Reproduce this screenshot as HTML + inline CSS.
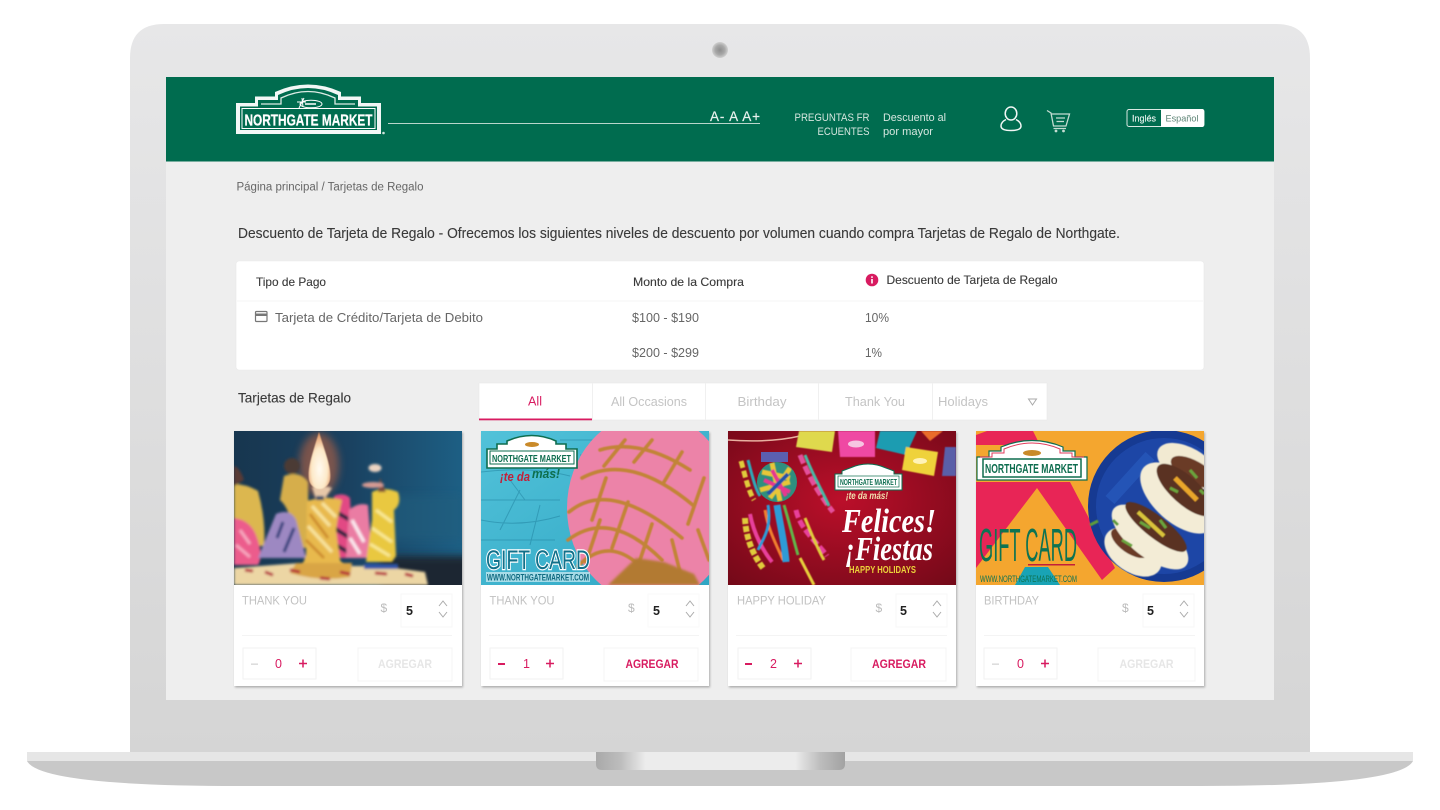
<!DOCTYPE html>
<html lang="es"><head><meta charset="utf-8"><title>Northgate Market</title>
<style>html,body{margin:0;padding:0;background:#fff;width:1440px;height:810px;overflow:hidden}svg{display:block}text{font-family:"Liberation Sans",sans-serif}</style></head>
<body>
<svg xmlns="http://www.w3.org/2000/svg" width="1440" height="810" viewBox="0 0 1440 810">
<defs>
<linearGradient id="lid" x1="0" y1="0" x2="0" y2="1"><stop offset="0" stop-color="#e7e7e8"/><stop offset="1" stop-color="#d5d5d5"/></linearGradient>
<linearGradient id="notch" x1="0" y1="0" x2="1" y2="0"><stop offset="0" stop-color="#a9a9a9"/><stop offset=".1" stop-color="#bdbdbd"/><stop offset=".2" stop-color="#ececec"/><stop offset=".8" stop-color="#ececec"/><stop offset=".9" stop-color="#bdbdbd"/><stop offset="1" stop-color="#a2a2a2"/></linearGradient>
<radialGradient id="cam"><stop offset="0" stop-color="#8d8d8d"/><stop offset=".6" stop-color="#a8a8a8"/><stop offset="1" stop-color="#d0d0d0"/></radialGradient>
<linearGradient id="bg1" x1="0" y1="0" x2="1" y2="0"><stop offset="0" stop-color="#17364f"/><stop offset=".5" stop-color="#1a4160"/><stop offset="1" stop-color="#1d5f84"/></linearGradient>
<radialGradient id="flame" cx=".5" cy=".65" r=".6"><stop offset="0" stop-color="#fffaf0"/><stop offset=".6" stop-color="#fde9c8"/><stop offset="1" stop-color="#e49a68"/></radialGradient>
<radialGradient id="red" cx=".5" cy=".45" r=".75"><stop offset="0" stop-color="#bb0f2a"/><stop offset="1" stop-color="#720918"/></radialGradient>
<linearGradient id="wood" x1="0" y1="0" x2="1" y2="1"><stop offset="0" stop-color="#52c2d9"/><stop offset="1" stop-color="#2fa6c4"/></linearGradient>
<filter id="b1" x="-20%" y="-20%" width="140%" height="140%"><feGaussianBlur stdDeviation="1.300"/></filter>
<filter id="b3" x="-40%" y="-40%" width="180%" height="180%"><feGaussianBlur stdDeviation="4"/></filter>
<filter id="b2" x="-5%" y="-5%" width="110%" height="110%"><feGaussianBlur stdDeviation=".5"/></filter>
<filter id="sh" x="-5%" y="-5%" width="110%" height="110%"><feDropShadow dx="1" dy="1.5" stdDeviation="1" flood-color="#000" flood-opacity=".28"/></filter>
<clipPath id="c1"><rect x="234" y="431" width="228" height="154"/></clipPath>
<clipPath id="c2"><rect x="481" y="431" width="228" height="154"/></clipPath>
<clipPath id="c3"><rect x="728" y="431" width="228" height="154"/></clipPath>
<clipPath id="c4"><rect x="976" y="431" width="228" height="154"/></clipPath>
</defs>

<!-- laptop -->
<path d="M130 752V58Q130 24 164 24H1276Q1310 24 1310 58V752Z" fill="url(#lid)"/>
<circle cx="720" cy="50" r="8" fill="url(#cam)"/>
<path d="M27 752H1413V761Q1400 786 1200 786H240Q40 786 27 761Z" fill="#c8c8c8"/>
<rect x="27" y="752" width="1386" height="9" fill="#e6e6e6"/>
<path d="M596 752H845V764Q845 770 839 770H602Q596 770 596 764Z" fill="url(#notch)"/>

<!-- screen -->
<rect x="166" y="77" width="1108" height="623" fill="#eeeeee"/>
<rect x="166" y="77" width="1108" height="84.500" fill="#006c4f"/>

<!-- logo -->
<path d="M236 134V103H255V96.500H275V92Q308 77 341 92V96.500H361V103H381V134Z" fill="#fff" opacity=".95"/>
<path d="M240 130V106.500H258V100H278V95Q308 81 338 95V100H358V106.500H377V130Z" fill="#006c4f"/>
<path d="M261 104H281V98Q308 85 335 98V104H355" fill="none" stroke="#dcebe5" stroke-width="1.300"/>
<rect x="242" y="108.500" width="133" height="20" fill="none" stroke="#fff" stroke-width="1"/>
<text x="244.500" y="125.500" font-size="15.500" font-weight="700" fill="#fff" stroke="#fff" stroke-width=".25" textLength="128" lengthAdjust="spacingAndGlyphs">NORTHGATE MARKET</text>
<ellipse cx="311" cy="104" rx="11" ry="3.800" fill="none" stroke="#fff" stroke-width="1"/>
<path d="M303 107l-1-9M297 102h9M299 108l5-10" stroke="#fff" stroke-width="1"/>
<path d="M305 104h11" stroke="#fff" stroke-width="1.500"/>
<circle cx="383.500" cy="133" r="1.300" fill="#cfe3db"/>
<rect x="388" y="123" width="372" height="1" fill="#b9d6cb"/>

<text x="710" y="121" font-size="13.500" fill="#e8f2ee" stroke="#e8f2ee" stroke-width=".2" textLength="50" lengthAdjust="spacing">A- A A+</text>
<g font-size="11.300" fill="#d5e6df">
<text x="869.500" y="121" text-anchor="end" textLength="75" lengthAdjust="spacingAndGlyphs">PREGUNTAS FR</text>
<text x="869.500" y="135" text-anchor="end" textLength="52" lengthAdjust="spacingAndGlyphs">ECUENTES</text>
<text x="883" y="121" textLength="63" lengthAdjust="spacingAndGlyphs">Descuento al</text>
<text x="883" y="135" textLength="50" lengthAdjust="spacingAndGlyphs">por mayor</text>
</g>
<!-- user -->
<g fill="none" stroke="#f2f7f5" stroke-width="1.500">
<ellipse cx="1011" cy="113.500" rx="5.800" ry="6.500"/>
<path d="M1006 119.500C1002 121.500 1001 124 1001 126C1001 129 1004 130.500 1011 130.500C1018 130.500 1021 129 1021 126C1021 124 1020 121.500 1016 119.500"/>
</g>
<!-- cart -->
<g fill="none" stroke="#c4dcd2" stroke-width="1.300">
<path d="M1047 110.500L1051 113L1053.500 126H1066L1069.500 114H1051.500"/>
<path d="M1056 118H1065M1056.500 121.500H1064M1053.500 128.500H1066"/>
</g>
<circle cx="1056" cy="131" r="1.400" fill="#c4dcd2"/><circle cx="1063.500" cy="131" r="1.400" fill="#c4dcd2"/>
<!-- lang -->
<rect x="1127" y="109.500" width="77" height="17" rx="2" fill="#006c4f" stroke="#d8e8e2" stroke-width="1"/>
<path d="M1161 109H1202Q1204 109 1204 111V125Q1204 127 1202 127H1161Z" fill="#fff"/>
<text x="1132" y="121.500" font-size="9.500" fill="#e8f2ee" stroke="#e8f2ee" stroke-width=".15" textLength="24" lengthAdjust="spacingAndGlyphs">Inglés</text>
<text x="1165.500" y="121.500" font-size="9.500" fill="#5f8577" textLength="33" lengthAdjust="spacingAndGlyphs">Español</text>

<text x="236.500" y="190.500" font-size="11.500" fill="#666" textLength="187" lengthAdjust="spacingAndGlyphs">Página principal / Tarjetas de Regalo</text>
<text x="238" y="238" font-size="14.300" fill="#3a3a3a" stroke="#3a3a3a" stroke-width=".12" textLength="882" lengthAdjust="spacingAndGlyphs">Descuento de Tarjeta de Regalo - Ofrecemos los siguientes niveles de descuento por volumen cuando compra Tarjetas de Regalo de Northgate.</text>

<!-- table -->
<rect x="236" y="261" width="968" height="109" rx="3" fill="#fff" stroke="#e9e9e9" stroke-width=".6"/>
<rect x="237" y="300.500" width="966" height="1" fill="#f4f4f4"/>
<g font-size="12" fill="#3a3a3a" stroke="#3a3a3a" stroke-width=".12">
<text x="256" y="286" textLength="70" lengthAdjust="spacingAndGlyphs">Tipo de Pago</text>
<text x="633" y="286" textLength="111" lengthAdjust="spacingAndGlyphs">Monto de la Compra</text>
<text x="886.500" y="284" textLength="171" lengthAdjust="spacingAndGlyphs">Descuento de Tarjeta de Regalo</text>
</g>
<circle cx="872" cy="280" r="6.300" fill="#d81b60"/>
<rect x="871.200" y="279" width="1.600" height="4.500" fill="#fff"/><rect x="871.200" y="276.300" width="1.600" height="1.600" fill="#fff"/>
<g fill="none" stroke="#777" stroke-width="1.200"><rect x="255.500" y="311.500" width="11.500" height="10" rx="1"/></g>
<rect x="255.500" y="313.500" width="11.500" height="2.500" fill="#777"/>
<g font-size="12.500" fill="#666">
<text x="275" y="322" textLength="208" lengthAdjust="spacingAndGlyphs">Tarjeta de Crédito/Tarjeta de Debito</text>
<text x="632" y="322" textLength="67" lengthAdjust="spacingAndGlyphs">$100 - $190</text>
<text x="632" y="357" textLength="67" lengthAdjust="spacingAndGlyphs">$200 - $299</text>
<text x="865" y="322" textLength="24" lengthAdjust="spacingAndGlyphs">10%</text>
<text x="865" y="357" textLength="17" lengthAdjust="spacingAndGlyphs">1%</text>
</g>

<!-- tabs -->
<text x="238" y="402.500" font-size="14" fill="#3a3a3a" stroke="#3a3a3a" stroke-width=".12" textLength="113" lengthAdjust="spacingAndGlyphs">Tarjetas de Regalo</text>
<rect x="479" y="383" width="568" height="37" fill="#fff" stroke="#e9e9e9" stroke-width=".6"/>
<path d="M592.500 383V420M705.500 383V420M818.500 383V420M932.500 383V420" stroke="#f0f0f0" stroke-width="1"/>
<rect x="479" y="418.500" width="113" height="1.800" fill="#d81b60"/>
<g font-size="12.500" fill="#c4c4c4">
<text x="528" y="405.500" fill="#d81b60" textLength="14" lengthAdjust="spacingAndGlyphs">All</text>
<text x="611" y="406" textLength="76" lengthAdjust="spacingAndGlyphs">All Occasions</text>
<text x="737.500" y="406" textLength="49" lengthAdjust="spacingAndGlyphs">Birthday</text>
<text x="845" y="406" textLength="60" lengthAdjust="spacingAndGlyphs">Thank You</text>
<text x="938" y="406" textLength="50" lengthAdjust="spacingAndGlyphs">Holidays</text>
</g>
<path d="M1028.500 399H1036.500L1032.500 405Z" fill="none" stroke="#aaa" stroke-width="1"/>

<!-- card bodies -->
<g filter="url(#sh)" fill="#fff">
<rect x="234" y="431" width="228" height="255"/>
<rect x="481" y="431" width="228" height="255"/>
<rect x="728" y="431" width="228" height="255"/>
<rect x="976" y="431" width="228" height="255"/>
</g>

<!-- image 1: candles -->
<g clip-path="url(#c1)">
<rect x="234" y="431" width="228" height="154" fill="url(#bg1)"/>
<rect x="390" y="495" width="72" height="45" fill="#225f7e" opacity=".5" filter="url(#b3)"/>
<rect x="380" y="556" width="100" height="40" fill="#1c2730" filter="url(#b3)"/>
<ellipse cx="319" cy="465" rx="20" ry="32" fill="#c9663f" opacity=".55" filter="url(#b3)"/>
<g filter="url(#b1)">
<path d="M234 484Q246 484 258 491Q266 520 264 546H234Z" fill="#dcb750"/>
<path d="M234 466Q240 468 244 480L234 486Z" fill="#5a3a36"/>
<path d="M234 518Q250 520 256 535Q264 555 258 565H234Z" fill="#ec5c8c"/>
<path d="M240 530l10 14M236 545l14 12" stroke="#f7a8c0" stroke-width="3"/>
<path d="M284 476Q300 470 308 482L309 548H296Q292 510 280 500Z" fill="#d6ae4c"/>
<ellipse cx="292" cy="466" rx="8" ry="8" fill="#4c3a35"/>
<path d="M276 514Q290 508 296 520L306 558H258Z" fill="#9d88c2"/>
<path d="M283 522l-6 16M294 528l-10 24" stroke="#2b3c78" stroke-width="3"/>
<path d="M334 496Q344 492 350 498L353 558H330Z" fill="#e24a84"/>
<path d="M336 512l14 8M334 528l16 10M334 544l14 8" stroke="#22283f" stroke-width="4"/>
<path d="M349 510Q358 502 368 505L372 558H346Z" fill="#ea7ba3"/>
<path d="M352 520l12 22M350 538l10 16" stroke="#fbeaf0" stroke-width="3.500"/>
<path d="M372 492Q384 486 398 492Q402 504 394 510L396 556L392 562H366L372 520Z" fill="#e9c83f"/>
<path d="M376 510l16 12M372 528l20 14M370 544l20 12" stroke="#f9ea98" stroke-width="3"/>
<path d="M380 478L386 492H378Z" fill="#7b4a3a"/>
<ellipse cx="373" cy="485" rx="11" ry="3" fill="#d59a93"/>
<ellipse cx="375" cy="468" rx="6.500" ry="4" fill="#ecd4c2"/>
<path d="M312 487Q322 484 332 488L324 500H316Z" fill="#e7c7a9"/>
<path d="M307 501Q325 495 342 500Q338 515 336 530L340 560L348 572H300L306 555Z" fill="#e8b94e"/>
<path d="M312 506l18 20M308 526l24 26M322 503l14 14" stroke="#f8e39c" stroke-width="3.500"/>
<path d="M310 514l18 24M306 540l18 18" stroke="#c98526" stroke-width="2.500"/>
<path d="M316 496H324V500H316Z" fill="#25496a"/>
</g>
<path d="M319 432C313 452 307 468 309 480C312 492 327 492 330 480C332 468 325 452 319 432Z" fill="url(#flame)" filter="url(#b2)"/>
<g filter="url(#b1)">
<path d="M234 568L300 563L340 566L380 566L425 572L428 585H234Z" fill="#ecd6a4"/>
<path d="M296 563H352L350 577Q320 582 290 573Z" fill="#d9a544"/>
<path d="M364 564H398V569H364Z" fill="#2f55a8"/>
<path d="M290 570l10 2M320 578l10 1M245 570l8 1M340 572l10 2M375 573l12 1M265 572l8 3M405 574l8 2" stroke="#b5243a" stroke-width="3"/>
</g>
</g>

<!-- image 2: concha -->
<g clip-path="url(#c2)">
<rect x="481" y="431" width="228" height="154" fill="url(#wood)"/>
<g stroke="#1f7f9e" stroke-width="1" fill="none" opacity=".5">
<path d="M481 472Q530 466 570 476M481 500H560M481 520Q520 528 560 516M481 540H555M510 480L525 500M520 490L500 530M540 505L530 545M560 440H620M580 455H610"/>
</g>
<ellipse cx="650" cy="508" rx="83" ry="95" fill="#ec83a8"/>
<g fill="none" stroke="#c28437" stroke-width="3.600" stroke-linecap="round" filter="url(#b2)">
<path d="M600 450Q640 438 690 470"/>
<path d="M582 478Q630 452 694 506"/>
<path d="M569 512Q610 478 682 538"/>
<path d="M568 540Q610 508 662 560"/>
<path d="M578 566Q610 534 644 570"/>
<path d="M625 440L604 466M652 440L634 462M682 452L664 482M704 478L688 524M606 478L592 520M628 502L612 548M652 524L640 560M672 540L680 572M698 530L709 560M600 520L586 562"/>
</g>
<path d="M608 585L636 558L664 562L694 574L700 585Z" fill="#b27a30" filter="url(#b1)"/>
<path d="M487 468V449H497V444H507V441Q532 430 556 441V444H566V449H577V468Z" fill="#fff" stroke="#0e6d4f" stroke-width="1.600"/>
<rect x="490" y="451" width="84" height="13" fill="#fff" stroke="#0e6d4f" stroke-width="1"/>
<text x="492" y="462" font-size="10.500" font-weight="700" fill="#0e6d4f" textLength="79" lengthAdjust="spacingAndGlyphs">NORTHGATE MARKET</text>
<ellipse cx="532" cy="444.500" rx="7" ry="2.500" fill="#c98a2a"/>
<text x="500" y="481" font-size="13" font-weight="700" font-style="italic" fill="#c2203a" textLength="30" lengthAdjust="spacingAndGlyphs">¡te da</text>
<text x="532" y="478" font-size="13" font-weight="700" font-style="italic" fill="#0d6f4e" textLength="28" lengthAdjust="spacingAndGlyphs">más!</text>
<text x="486" y="569" font-size="27" fill="#11708a" stroke="#fff" stroke-width="2.400" paint-order="stroke" textLength="104" lengthAdjust="spacingAndGlyphs">GIFT CARD</text>
<rect x="486" y="572" width="104" height="10" fill="#fff" opacity=".55"/>
<text x="487" y="580.500" font-size="9" fill="#0f6a80" font-weight="700" textLength="102" lengthAdjust="spacingAndGlyphs">WWW.NORTHGATEMARKET.COM</text>
</g>

<!-- image 3: holidays -->
<g clip-path="url(#c3)">
<rect x="728" y="431" width="228" height="154" fill="url(#red)"/>
<path d="M728 440Q770 443 800 436" stroke="#e8b0a0" stroke-width="1.500" fill="none"/>
<g filter="url(#b2)">
<path d="M799 431H835L832 452L796 447Z" fill="#dfd94e"/>
<path d="M838 431H875L875 457H840Z" fill="#ef4aa3"/>
<path d="M880 431H917L906 455L876 448Z" fill="#1e9cb1"/>
<path d="M921 431H943L930 441Z" fill="#e96c2a"/>
<path d="M906 447L938 452L934 476L902 470Z" fill="#efd23a"/>
<path d="M945 447H956V476H942Z" fill="#5a5fa8"/>
</g>
<ellipse cx="856" cy="444" rx="8" ry="3.500" fill="#f6c6e2"/>
<ellipse cx="920" cy="461" rx="7" ry="3" fill="#fff3b8"/>
<g fill="none" filter="url(#b2)">
<path d="M741 461C745 475 748 490 754 500" stroke="#e0cb3a" stroke-width="5" stroke-dasharray="7 3"/>
<path d="M748 460C752 475 755 488 760 496" stroke="#2fa8b8" stroke-width="3"/>
<path d="M800 455C810 480 820 495 833 512" stroke="#e44f9b" stroke-width="5" stroke-dasharray="9 3"/>
<path d="M805 455C815 480 823 492 829 506" stroke="#49b8a4" stroke-width="3"/>
<path d="M745 518C746 540 754 556 763 568" stroke="#e0cb3a" stroke-width="6" stroke-dasharray="6 2"/>
<path d="M750 514C754 535 764 552 772 562" stroke="#e83f9b" stroke-width="4"/>
<path d="M765 510C768 530 778 548 783 560" stroke="#ef7f2e" stroke-width="3"/>
<path d="M777 505C780 525 785 545 786 562" stroke="#2f9bd6" stroke-width="7"/>
<path d="M784 505C790 525 795 545 798 555" stroke="#62b548" stroke-width="3"/>
<path d="M796 510C800 530 820 545 827 556" stroke="#e83f9b" stroke-width="5" stroke-dasharray="8 3"/>
<path d="M805 518C812 535 818 550 824 560" stroke="#e0cb3a" stroke-width="3"/>
<path d="M768 505C772 530 762 540 758 550" stroke="#2f9bd6" stroke-width="3"/>
<path d="M800 558L814 585" stroke="#e6cf3a" stroke-width="3"/>
</g>
<path d="M761 452H788V462H761Z" fill="#5b5fb0"/>
<circle cx="777" cy="482" r="20" fill="#2f8f7f"/>
<g fill="none" filter="url(#b2)">
<path d="M762 472l28 6M760 490l30-8M772 463l8 38M790 468l-20 30" stroke="#e8c638" stroke-width="5"/>
<path d="M764 480l26 12M772 470l14 26" stroke="#e6398f" stroke-width="4"/>
<path d="M768 494l20-20" stroke="#2252a8" stroke-width="4"/>
</g>
<path d="M835 490V474H842V471L850 468Q868 460 886 468L894 471V474H902V490Z" fill="#fff" stroke="#0d6d4f" stroke-width="1"/>
<rect x="838" y="476" width="61" height="11" fill="#fff" stroke="#0d6d4f" stroke-width=".7"/>
<text x="840" y="485" font-size="8.500" font-weight="700" fill="#0d6d4f" textLength="57" lengthAdjust="spacingAndGlyphs">NORTHGATE MARKET</text>
<text x="846" y="499" font-size="10" font-style="italic" font-weight="700" fill="#f2e2b0" textLength="42" lengthAdjust="spacingAndGlyphs">¡te da más!</text>
<text x="842" y="532" font-size="34" font-style="italic" font-weight="700" fill="#fff" style="font-family:'Liberation Serif',serif" textLength="94" lengthAdjust="spacingAndGlyphs">Felices!</text>
<text x="845" y="560" font-size="34" font-style="italic" font-weight="700" fill="#fff" style="font-family:'Liberation Serif',serif" textLength="88" lengthAdjust="spacingAndGlyphs">¡Fiestas</text>
<text x="849" y="573" font-size="10.500" font-weight="700" fill="#ecd23a" textLength="67" lengthAdjust="spacingAndGlyphs">HAPPY HOLIDAYS</text>
</g>

<!-- image 4: tacos -->
<g clip-path="url(#c4)">
<rect x="976" y="431" width="228" height="154" fill="#f4a62f"/>
<path d="M976 435L987 431H1033L1040 445H976Z" fill="#e82556"/>
<path d="M976 482H1070L1115 568L1102 580L1037 488L976 568Z" fill="#e82556"/>
<path d="M1015 585L1025 567H1048L1060 585Z" fill="#19a3b5"/>
<circle cx="1164" cy="506" r="76" fill="#163a92"/>
<circle cx="1164" cy="506" r="68" fill="#1d46a6"/>
<path d="M1110 500L1150 456" stroke="#2a5ec2" stroke-width="12" opacity=".6"/>
<g filter="url(#b2)">
<ellipse cx="1188" cy="466" rx="34" ry="18" transform="rotate(30 1188 466)" fill="#f2ead2"/>
<ellipse cx="1194" cy="472" rx="26" ry="11" transform="rotate(30 1194 472)" fill="#6a3a27"/>
<ellipse cx="1133" cy="552" rx="32" ry="20" transform="rotate(35 1133 552)" fill="#f3ecd6"/>
<ellipse cx="1130" cy="543" rx="22" ry="10" transform="rotate(35 1130 543)" fill="#6a3a27"/>
<ellipse cx="1150" cy="537" rx="46" ry="20" transform="rotate(38 1150 537)" fill="#f3ecd6"/>
<ellipse cx="1156" cy="527" rx="38" ry="11" transform="rotate(38 1156 527)" fill="#5a3222"/>
<ellipse cx="1178" cy="498" rx="46" ry="24" transform="rotate(42 1178 498)" fill="#f3ecd6"/>
<ellipse cx="1185" cy="490" rx="36" ry="14" transform="rotate(42 1185 490)" fill="#5a3222"/>
<path d="M1175 478l22 22" stroke="#e9a62c" stroke-width="5"/>
<path d="M1138 512l26 24" stroke="#d9c33a" stroke-width="4"/>
<path d="M1190 470l7 8M1170 488l8 4M1140 522l10 6M1122 540l10 6M1200 490l4 4M1160 520l6 8" stroke="#6aa53d" stroke-width="3"/>
<path d="M1090 525l8-4M1118 525l-5-5" stroke="#5f9c3a" stroke-width="3"/>
</g>
<path d="M977 480V457H989V451H1001V447Q1032 434 1063 447V451H1075V457H1087V480Z" fill="#fff" stroke="#0e6d4f" stroke-width="1.200"/>
<path d="M980 457H992V453H1004V449Q1032 437 1060 449V453H1072V457H1084" fill="none" stroke="#e23a5a" stroke-width="1"/>
<rect x="983" y="459" width="98" height="18" fill="#fff" stroke="#0e6d4f" stroke-width="1.500"/>
<text x="985" y="473" font-size="12.500" font-weight="700" fill="#0e6d4f" textLength="93" lengthAdjust="spacingAndGlyphs">NORTHGATE MARKET</text>
<ellipse cx="1032" cy="453" rx="9" ry="3" fill="#c98a2a"/>
<text x="979" y="561" font-size="46" fill="#0e7352" textLength="98" lengthAdjust="spacingAndGlyphs" style="font-family:'Liberation Sans Narrow','Liberation Sans',sans-serif">GIFT CARD</text>
<rect x="1028" y="564" width="47" height="1.500" fill="#c21f3a"/>
<text x="980" y="582" font-size="9" fill="#0e7352" textLength="97" lengthAdjust="spacingAndGlyphs">WWW.NORTHGATEMARKET.COM</text>
</g>

<!-- card 1 controls -->
<g>
<text x="242" y="604.500" font-size="11.500" fill="#c2c2c2" textLength="65" lengthAdjust="spacingAndGlyphs">THANK YOU</text>
<text x="380.500" y="612" font-size="12" fill="#bbb">$</text>
<rect x="401" y="594" width="51" height="33" fill="#fff" stroke="#f7f7f7"/>
<text x="406" y="615" font-size="12.500" font-weight="700" fill="#222">5</text>
<path d="M439 606L443 601L447 606M439 612L443 617L447 612" fill="none" stroke="#aaa" stroke-width="1"/>
<rect x="242" y="635" width="210" height="1" fill="#f4f4f4"/>
<rect x="243" y="648" width="73" height="31" fill="#fff" stroke="#f2f2f2"/>
<rect x="358" y="648" width="94" height="33" fill="#fff" stroke="#f4f4f4"/>
<rect x="251" y="663.500" width="7" height="1.300" fill="#d5d5d5"/>
<text x="275" y="668" font-size="12.500" fill="#d81b60">0</text>
<path d="M299 663.500h8M303 659.500v8" stroke="#d81b60" stroke-width="1.500"/>
<text x="378" y="668" font-size="11.500" font-weight="700" fill="#e6e6e6" textLength="54" lengthAdjust="spacingAndGlyphs">AGREGAR</text>
</g>
<!-- card 2 controls -->
<g>
<text x="489.500" y="604.500" font-size="11.500" fill="#c2c2c2" textLength="65" lengthAdjust="spacingAndGlyphs">THANK YOU</text>
<text x="628" y="612" font-size="12" fill="#bbb">$</text>
<rect x="648" y="594" width="51" height="33" fill="#fff" stroke="#fafafa"/>
<text x="653" y="615" font-size="12.500" font-weight="700" fill="#222">5</text>
<path d="M686 606L690 601L694 606M686 612L690 617L694 612" fill="none" stroke="#aaa" stroke-width="1"/>
<rect x="489" y="635" width="210" height="1" fill="#f4f4f4"/>
<rect x="490" y="648" width="73" height="31" fill="#fff" stroke="#f2f2f2"/>
<rect x="604" y="648" width="94" height="33" fill="#fff" stroke="#f4f4f4"/>
<rect x="498" y="663" width="7" height="2" fill="#d81b60"/>
<text x="523" y="668" font-size="12.500" fill="#d81b60">1</text>
<path d="M546 663.500h8M550 659.500v8" stroke="#d81b60" stroke-width="1.500"/>
<text x="625.500" y="668" font-size="11.500" font-weight="700" fill="#d81b60" textLength="53" lengthAdjust="spacingAndGlyphs">AGREGAR</text>
</g>
<!-- card 3 controls -->
<g>
<text x="737" y="604.500" font-size="11.500" fill="#c2c2c2" textLength="89" lengthAdjust="spacingAndGlyphs">HAPPY HOLIDAY</text>
<text x="875.500" y="612" font-size="12" fill="#bbb">$</text>
<rect x="896" y="594" width="51" height="33" fill="#fff" stroke="#f7f7f7"/>
<text x="900" y="615" font-size="12.500" font-weight="700" fill="#222">5</text>
<path d="M933 606L937 601L941 606M933 612L937 617L941 612" fill="none" stroke="#aaa" stroke-width="1"/>
<rect x="736" y="635" width="211" height="1" fill="#f4f4f4"/>
<rect x="738" y="648" width="73" height="31" fill="#fff" stroke="#f2f2f2"/>
<rect x="851" y="648" width="95" height="33" fill="#fff" stroke="#f4f4f4"/>
<rect x="745" y="663" width="7" height="2" fill="#d81b60"/>
<text x="770" y="668" font-size="12.500" fill="#d81b60">2</text>
<path d="M794 663.500h8M798 659.500v8" stroke="#d81b60" stroke-width="1.500"/>
<text x="872" y="668" font-size="11.500" font-weight="700" fill="#d81b60" textLength="54" lengthAdjust="spacingAndGlyphs">AGREGAR</text>
</g>
<!-- card 4 controls -->
<g>
<text x="984" y="604.500" font-size="11.500" fill="#c2c2c2" textLength="55" lengthAdjust="spacingAndGlyphs">BIRTHDAY</text>
<text x="1122" y="612" font-size="12" fill="#bbb">$</text>
<rect x="1143" y="594" width="51" height="33" fill="#fff" stroke="#f7f7f7"/>
<text x="1147" y="615" font-size="12.500" font-weight="700" fill="#222">5</text>
<path d="M1180 606L1184 601L1188 606M1180 612L1184 617L1188 612" fill="none" stroke="#aaa" stroke-width="1"/>
<rect x="984" y="635" width="211" height="1" fill="#f4f4f4"/>
<rect x="984" y="648" width="73" height="31" fill="#fff" stroke="#f2f2f2"/>
<rect x="1098" y="648" width="97" height="33" fill="#fff" stroke="#f4f4f4"/>
<rect x="992" y="663.500" width="7" height="1.300" fill="#d5d5d5"/>
<text x="1017" y="668" font-size="12.500" fill="#d81b60">0</text>
<path d="M1041 663.500h8M1045 659.500v8" stroke="#d81b60" stroke-width="1.500"/>
<text x="1119.500" y="668" font-size="11.500" font-weight="700" fill="#e6e6e6" textLength="54" lengthAdjust="spacingAndGlyphs">AGREGAR</text>
</g>
</svg>
</body></html>
